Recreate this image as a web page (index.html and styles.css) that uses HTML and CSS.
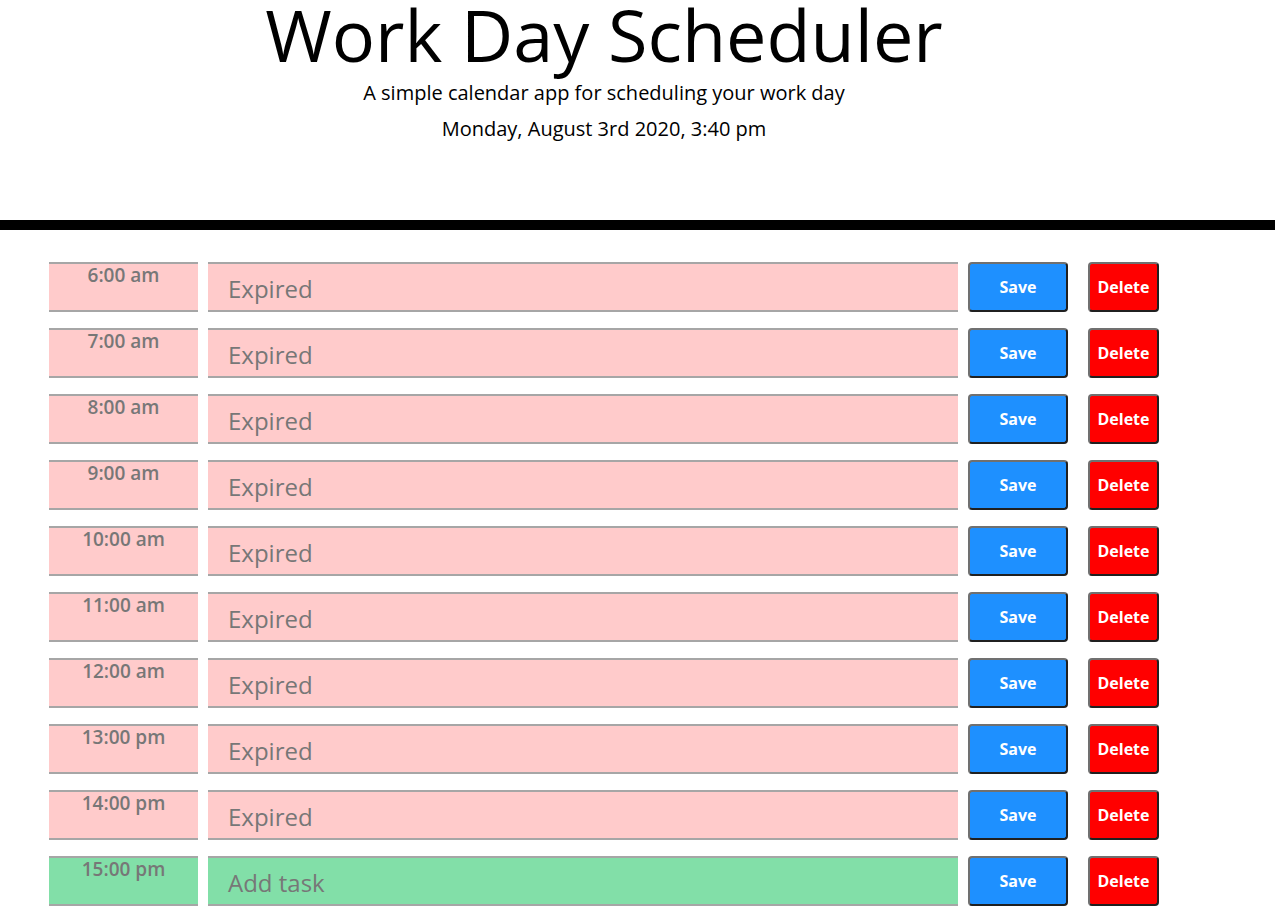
FILE: index.html
```html
<!DOCTYPE html>
<html lang="en">
<head>
<meta charset="utf-8">
<title>Work Day Scheduler</title>
<link rel="stylesheet" href="styles.css">
</head>
<body>
<header class="jumbo">
  <h1 class="title">Work Day Scheduler</h1>
  <p class="lead">A simple calendar app for scheduling your work day</p>
  <p class="today">Monday, August 3rd 2020, 3:40 pm</p>
</header>
<div class="bar"></div>
<main class="planner">
  <div class="row"><div class="hour past">6:00 am</div><div class="task past">Expired</div><button class="btn save">Save</button><button class="btn del">Delete</button></div>
  <div class="row"><div class="hour past">7:00 am</div><div class="task past">Expired</div><button class="btn save">Save</button><button class="btn del">Delete</button></div>
  <div class="row"><div class="hour past">8:00 am</div><div class="task past">Expired</div><button class="btn save">Save</button><button class="btn del">Delete</button></div>
  <div class="row"><div class="hour past">9:00 am</div><div class="task past">Expired</div><button class="btn save">Save</button><button class="btn del">Delete</button></div>
  <div class="row"><div class="hour past">10:00 am</div><div class="task past">Expired</div><button class="btn save">Save</button><button class="btn del">Delete</button></div>
  <div class="row"><div class="hour past">11:00 am</div><div class="task past">Expired</div><button class="btn save">Save</button><button class="btn del">Delete</button></div>
  <div class="row"><div class="hour past">12:00 am</div><div class="task past">Expired</div><button class="btn save">Save</button><button class="btn del">Delete</button></div>
  <div class="row"><div class="hour past">13:00 pm</div><div class="task past">Expired</div><button class="btn save">Save</button><button class="btn del">Delete</button></div>
  <div class="row"><div class="hour past">14:00 pm</div><div class="task past">Expired</div><button class="btn save">Save</button><button class="btn del">Delete</button></div>
  <div class="row"><div class="hour future">15:00 pm</div><div class="task future">Add task</div><button class="btn save">Save</button><button class="btn del">Delete</button></div>
</main>
</body>
</html>
```

FILE: styles.css
```css
html, body {
  margin: 0;
  padding: 0;
  background: #fff;
  font-family: "Open Sans", "DejaVu Sans", sans-serif;
  color: #000;
}

.jumbo {
  width: 1208px;
  text-align: center;
  padding: 0 0 72px;
}

.title {
  margin: 0;
  font-size: 72px;
  font-weight: 400;
  line-height: 68px;
}

.lead {
  margin: 8px 0 0;
  font-size: 20px;
  line-height: 34px;
}

.today {
  margin: 0;
  font-size: 20px;
  line-height: 38px;
}

.bar {
  height: 10px;
  background: #000;
}

.planner {
  display: flex;
  flex-direction: column;
  gap: 16px;
  padding: 32px 0 0 49px;
}

.row {
  display: flex;
  height: 50px;
}

.hour, .task {
  box-sizing: border-box;
  height: 50px;
  border-top: 2px solid #a6a6a6;
  border-bottom: 2px solid #a6a6a6;
  color: #777;
}

.hour {
  width: 149px;
  text-align: center;
  font-size: 19px;
  font-weight: 600;
  line-height: 22px;
  padding-top: 0;
}

.task {
  width: 750px;
  margin-left: 10px;
  font-size: 24px;
  line-height: 30px;
  padding: 10px 0 0 20px;
}

.past { background: #ffcbcb; }
.future { background: #82dfa8; }

.btn {
  box-sizing: border-box;
  height: 50px;
  border: 2px solid;
  border-color: #707070 #202020 #202020 #707070;
  border-radius: 4px;
  color: #fff;
  font-family: "Open Sans", "DejaVu Sans", sans-serif;
  font-weight: 700;
  font-size: 16px;
  padding: 0;
}

.save {
  width: 100px;
  margin-left: 10px;
  background: #1e90ff;
}

.del {
  width: 71px;
  margin-left: 20px;
  background: #ff0000;
}
```
